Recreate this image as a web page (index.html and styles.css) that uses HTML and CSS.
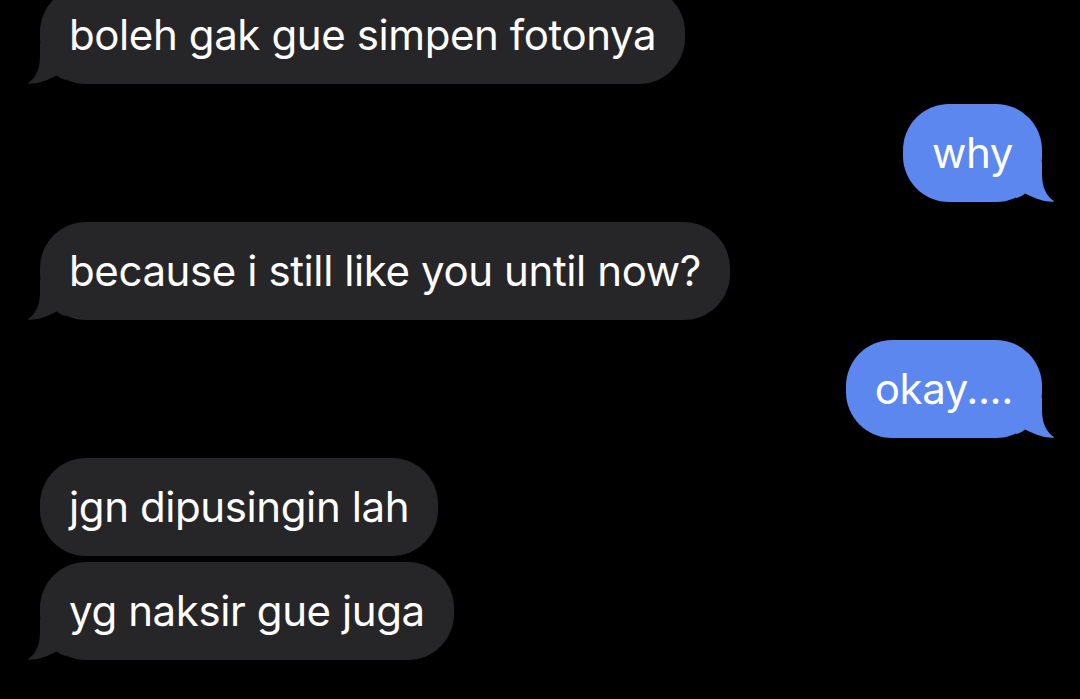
FILE: index.html
```html
<!DOCTYPE html>
<html>
<head>
<meta charset="utf-8">
<link rel="stylesheet" href="styles.css">
</head>
<body>
<div class="chat">
  <div class="bubble in tail">boleh gak gue simpen fotonya<svg class="tail-svg" viewBox="0 0 40 40" width="40" height="40"><path d="M0 0 L26 0 L26 12 C26 25 30 34 38.5 39.6 C30 40 22 38 9 31.5 C6 34 3 35.5 0 36 Z"/></svg></div>
  <div class="bubble out tail">why<svg class="tail-svg" viewBox="0 0 40 40" width="40" height="40"><path d="M0 0 L26 0 L26 12 C26 25 30 34 38.5 39.6 C30 40 22 38 9 31.5 C6 34 3 35.5 0 36 Z"/></svg></div>
  <div class="bubble in tail">because i still like you until now?<svg class="tail-svg" viewBox="0 0 40 40" width="40" height="40"><path d="M0 0 L26 0 L26 12 C26 25 30 34 38.5 39.6 C30 40 22 38 9 31.5 C6 34 3 35.5 0 36 Z"/></svg></div>
  <div class="bubble out tail">okay....<svg class="tail-svg" viewBox="0 0 40 40" width="40" height="40"><path d="M0 0 L26 0 L26 12 C26 25 30 34 38.5 39.6 C30 40 22 38 9 31.5 C6 34 3 35.5 0 36 Z"/></svg></div>
  <div class="bubble in">jgn dipusingin lah</div>
  <div class="bubble in tail grouped">yg naksir gue juga<svg class="tail-svg" viewBox="0 0 40 40" width="40" height="40"><path d="M0 0 L26 0 L26 12 C26 25 30 34 38.5 39.6 C30 40 22 38 9 31.5 C6 34 3 35.5 0 36 Z"/></svg></div>
</div>
</body>
</html>
```
FILE: styles.css
```css
html, body {
  margin: 0;
  padding: 0;
  background: #000;
  height: 100%;
  overflow: hidden;
}
.chat {
  display: flex;
  flex-direction: column;
  padding: 0 38px 0 40px;
  margin-top: -14px;
  font-family: Inter, "Noto Sans", sans-serif;
}
.bubble {
  position: relative;
  font-size: 42px;
  letter-spacing: -0.4px;
  line-height: 52px;
  padding: 23px 29px;
  border-radius: 46px;
  color: #fff;
  margin-top: 20px;
  white-space: nowrap;
}
.bubble:first-child { margin-top: 0; }
.bubble.grouped { margin-top: 6px; }
.in {
  align-self: flex-start;
  background: #262628;
}
.out {
  align-self: flex-end;
  background: #5b87ef;
}
.tail-svg {
  position: absolute;
  bottom: 0;
}
.out .tail-svg {
  right: -14px;
  fill: #5b87ef;
}
.in .tail-svg {
  left: -14px;
  fill: #262628;
  transform: scaleX(-1);
}
```
